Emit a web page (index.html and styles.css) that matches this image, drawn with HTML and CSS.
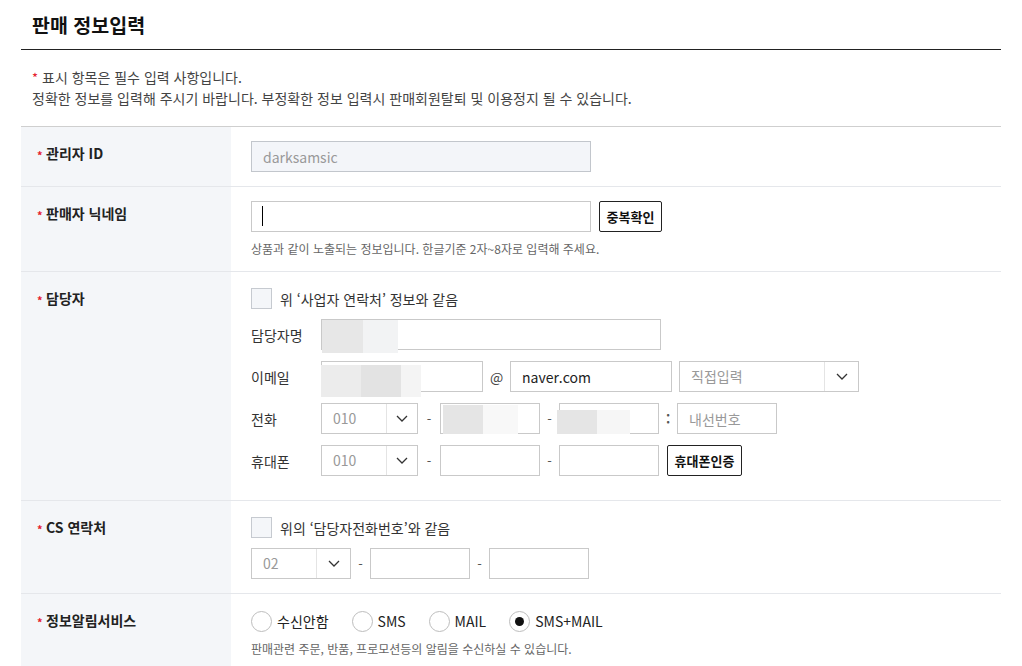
FILE: index.html
```html
<!DOCTYPE html>
<html lang="ko">
<head>
    <meta charset="UTF-8">
    <meta name="viewport" content="width=device-width, initial-scale=1.0">
    <title>판매 정보입력</title>
    <link rel="stylesheet" href="styles.css">
</head>
<body>
<div class="page">
    <h2 class="title">판매 정보입력</h2>

    <div class="notice">
        <p><span class="req">*</span> 표시 항목은 필수 입력 사항입니다.</p>
        <p>정확한 정보를 입력해 주시기 바랍니다. 부정확한 정보 입력시 판매회원탈퇴 및 이용정지 될 수 있습니다.</p>
    </div>

    <div class="form">
        <!-- 관리자 ID -->
        <div class="row">
            <div class="th"><span class="star">*</span>관리자 ID</div>
            <div class="td">
                <input class="inp w340" type="text" value="darksamsic" disabled>
            </div>
        </div>

        <!-- 닉네임 -->
        <div class="row">
            <div class="th"><span class="star">*</span>판매자 닉네임</div>
            <div class="td td-help">
                <div class="line">
                    <span class="field focus"><input class="inp w340" type="text"></span>
                    <button class="btn w63" type="button">중복확인</button>
                </div>
                <p class="help">상품과 같이 노출되는 정보입니다. 한글기준 2자~8자로 입력해 주세요.</p>
            </div>
        </div>

        <!-- 담당자 -->
        <div class="row">
            <div class="th"><span class="star">*</span>담당자</div>
            <div class="td td-check td-contact">
                <label class="line check"><span class="chk"></span>위 ‘사업자 연락처’ 정보와 같음</label>
                <div class="line">
                    <span class="lbl">담당자명</span>
                    <span class="field"><input class="inp w340" type="text"><span class="mask mask-name"></span></span>
                </div>
                <div class="line">
                    <span class="lbl">이메일</span>
                    <span class="field"><input class="inp w162" type="text"><span class="mask mask-mail"></span></span>
                    <span class="at">@</span>
                    <input class="inp w162" type="text" value="naver.com">
                    <div class="sel w180 ml7"><span class="sel-val">직접입력</span><span class="sel-arr wide"><svg width="12" height="7" viewBox="0 0 12 7"><polyline points="1,1 6,6 11,1" fill="none" stroke="#333" stroke-width="1.3"/></svg></span></div>
                </div>
                <div class="line">
                    <span class="lbl">전화</span>
                    <div class="sel w97"><span class="sel-val">010</span><span class="sel-arr"><svg width="12" height="7" viewBox="0 0 12 7"><polyline points="1,1 6,6 11,1" fill="none" stroke="#333" stroke-width="1.3"/></svg></span></div>
                    <span class="sep">-</span>
                    <span class="field"><input class="inp w100" type="text"><span class="mask mask-tel1"></span></span>
                    <span class="sep narrow">-</span>
                    <span class="field"><input class="inp w100" type="text"><span class="mask mask-tel2"></span></span>
                    <span class="sep colon">:</span>
                    <input class="inp w100" type="text" placeholder="내선번호">
                </div>
                <div class="line">
                    <span class="lbl">휴대폰</span>
                    <div class="sel w97"><span class="sel-val">010</span><span class="sel-arr"><svg width="12" height="7" viewBox="0 0 12 7"><polyline points="1,1 6,6 11,1" fill="none" stroke="#333" stroke-width="1.3"/></svg></span></div>
                    <span class="sep">-</span>
                    <input class="inp w100" type="text">
                    <span class="sep narrow">-</span>
                    <input class="inp w100" type="text">
                    <button class="btn w75" type="button">휴대폰인증</button>
                </div>
            </div>
        </div>

        <!-- CS 연락처 -->
        <div class="row">
            <div class="th"><span class="star">*</span>CS 연락처</div>
            <div class="td td-check">
                <label class="line check"><span class="chk"></span>위의 ‘담당자전화번호’와 같음</label>
                <div class="line">
                    <div class="sel w100"><span class="sel-val">02</span><span class="sel-arr wide"><svg width="12" height="7" viewBox="0 0 12 7"><polyline points="1,1 6,6 11,1" fill="none" stroke="#333" stroke-width="1.3"/></svg></span></div>
                    <span class="sep narrow">-</span>
                    <input class="inp w100" type="text">
                    <span class="sep narrow">-</span>
                    <input class="inp w100" type="text">
                </div>
            </div>
        </div>

        <!-- 정보알림서비스 -->
        <div class="row last">
            <div class="th"><span class="star">*</span>정보알림서비스</div>
            <div class="td td-help td-radio">
                <div class="line radios">
                    <label class="radio"><i></i>수신안함</label>
                    <label class="radio"><i></i>SMS</label>
                    <label class="radio"><i></i>MAIL</label>
                    <label class="radio on"><i></i>SMS+MAIL</label>
                </div>
                <p class="help">판매관련 주문, 반품, 프로모션등의 알림을 수신하실 수 있습니다.</p>
            </div>
        </div>
    </div>
</div>
</body>
</html>
```

FILE: styles.css
```css
* {
    box-sizing: border-box;
}
body {
    margin: 0;
    font-family: "Noto Sans CJK KR", "Noto Sans", sans-serif;
    color: #333;
    background: #fff;
}
.page {
    width: 980px;
    margin-left: 21px;
}
.title {
    margin: 0;
    padding: 12px 11px 11px;
    font-size: 19.5px;
    line-height: 26px;
    font-weight: 700;
    color: #111;
    border-bottom: 1px solid #222;
}
.notice {
    padding: 17px 11px 17px;
    font-size: 14px;
    line-height: 21px;
    color: #444;
}
.notice p {
    margin: 0;
}
.req {
    color: #e5202e;
    font-size: 13px;
}

/* form table */
.form {
    border-top: 1px solid #cfcfcf;
}
.row {
    display: grid;
    grid-template-columns: 210px 1fr;
    border-bottom: 1px solid #e5e7eb;
}
.row.last {
    border-bottom: 0;
    min-height: 80px;
}
.th {
    background: #f4f6f9;
    padding: 17px 16px;
    font-size: 14px;
    line-height: 18px;
    font-weight: 700;
    color: #222;
}
.star {
    display: inline-block;
    width: 9px;
    color: #e5202e;
    font-size: 11px;
    vertical-align: -1px;
}
.td {
    padding: 14px 20px;
    display: flex;
    flex-direction: column;
    align-items: flex-start;
    gap: 11px;
}
.td-help {
    gap: 8px;
    padding-bottom: 13px;
}
.td-check {
    padding-top: 16px;
    padding-bottom: 14px;
    gap: 10px;
}
.td-contact {
    padding-bottom: 24px;
}
.td-contact .line + .line + .line {
    margin-top: 1px;
}
.td-radio {
    padding-top: 16px;
}
.line {
    display: flex;
    align-items: center;
}
.lbl {
    width: 70px;
    font-size: 14px;
    color: #333;
}
.help {
    margin: 0;
    font-size: 12px;
    line-height: 18px;
    color: #666;
}

/* inputs */
.inp {
    height: 31px;
    margin: 0;
    padding: 0 11px;
    border: 1px solid #c9c9c9;
    border-radius: 0;
    background: #fff;
    font-family: inherit;
    font-size: 14px;
    color: #222;
    outline: none;
}
.inp::placeholder {
    color: #999;
}
.inp:disabled {
    background: #f3f5f9;
    border-color: #c2c6cc;
    color: #999;
    -webkit-text-fill-color: #999;
}
.w340 { width: 340px; }
.w180 { width: 180px; }
.w162 { width: 162px; }
.w100 { width: 100px; }
.w97 { width: 97px; }
.w75 { width: 75px; }
.w63 { width: 63px; }
.ml7 { margin-left: 7px; }

.field {
    position: relative;
    display: flex;
}
.field.focus::after {
    content: "";
    position: absolute;
    left: 11px;
    top: 5px;
    width: 1px;
    height: 20px;
    background: #000;
}
/* blurred personal data */
.mask {
    position: absolute;
}
.mask-name {
    left: 1px;
    top: 1px;
    width: 76px;
    height: 33px;
    background: linear-gradient(to right, #e7e7e7 0 41px, #f2f3f4 41px);
}
.mask-mail {
    left: 0;
    top: 4px;
    width: 100px;
    height: 32px;
    background: linear-gradient(to right, #ececec 0 40px, #e3e3e3 40px 80px, #f4f4f4 80px);
}
.mask-tel1 {
    left: 3px;
    top: 2px;
    width: 75px;
    height: 29px;
    background: linear-gradient(to right, #e5e5e5 0 40px, #f8f8f8 40px);
}
.mask-tel2 {
    left: -2px;
    top: 7px;
    width: 73px;
    height: 24px;
    background: linear-gradient(to right, #e5e5e5 0 40px, #f6f6f6 40px);
}

.sep {
    width: 22px;
    text-align: center;
    font-size: 13px;
    color: #555;
}
.sep.narrow {
    width: 19px;
}
.sep.colon {
    width: 18px;
    font-weight: 700;
}
.at {
    width: 27px;
    text-align: center;
    font-size: 14px;
    color: #444;
}

/* select box */
.sel {
    display: flex;
    height: 31px;
    border: 1px solid #c9c9c9;
    background: #fff;
}
.sel-val {
    flex: 1;
    padding-left: 11px;
    line-height: 29px;
    font-size: 14px;
    color: #999;
}
.sel-arr {
    width: 31px;
    border-left: 1px solid #e4e4e4;
    display: flex;
    align-items: center;
    justify-content: center;
}
.sel-arr.wide {
    width: 34px;
}

.btn {
    height: 31px;
    margin-left: 8px;
    padding: 0;
    border: 1px solid #222;
    border-radius: 2px;
    background: #fff;
    font-family: inherit;
    font-size: 13px;
    font-weight: 700;
    color: #111;
}

/* checkbox & radio */
.check {
    height: 21px;
    font-size: 14px;
    color: #333;
}
.chk {
    width: 21px;
    height: 21px;
    margin-right: 8px;
    border: 1px solid #c6cad0;
    background: #f4f6f9;
}
.radios {
    height: 22px;
}
.radio {
    display: flex;
    align-items: center;
    margin-right: 23px;
    font-size: 14px;
    color: #222;
}
.radio i {
    position: relative;
    width: 21px;
    height: 21px;
    margin-right: 5px;
    border: 1px solid #bdbdbd;
    border-radius: 50%;
    background: #fff;
}
.radio.on i::after {
    content: "";
    position: absolute;
    left: 5px;
    top: 5px;
    width: 9px;
    height: 9px;
    border-radius: 50%;
    background: #111;
}
```
